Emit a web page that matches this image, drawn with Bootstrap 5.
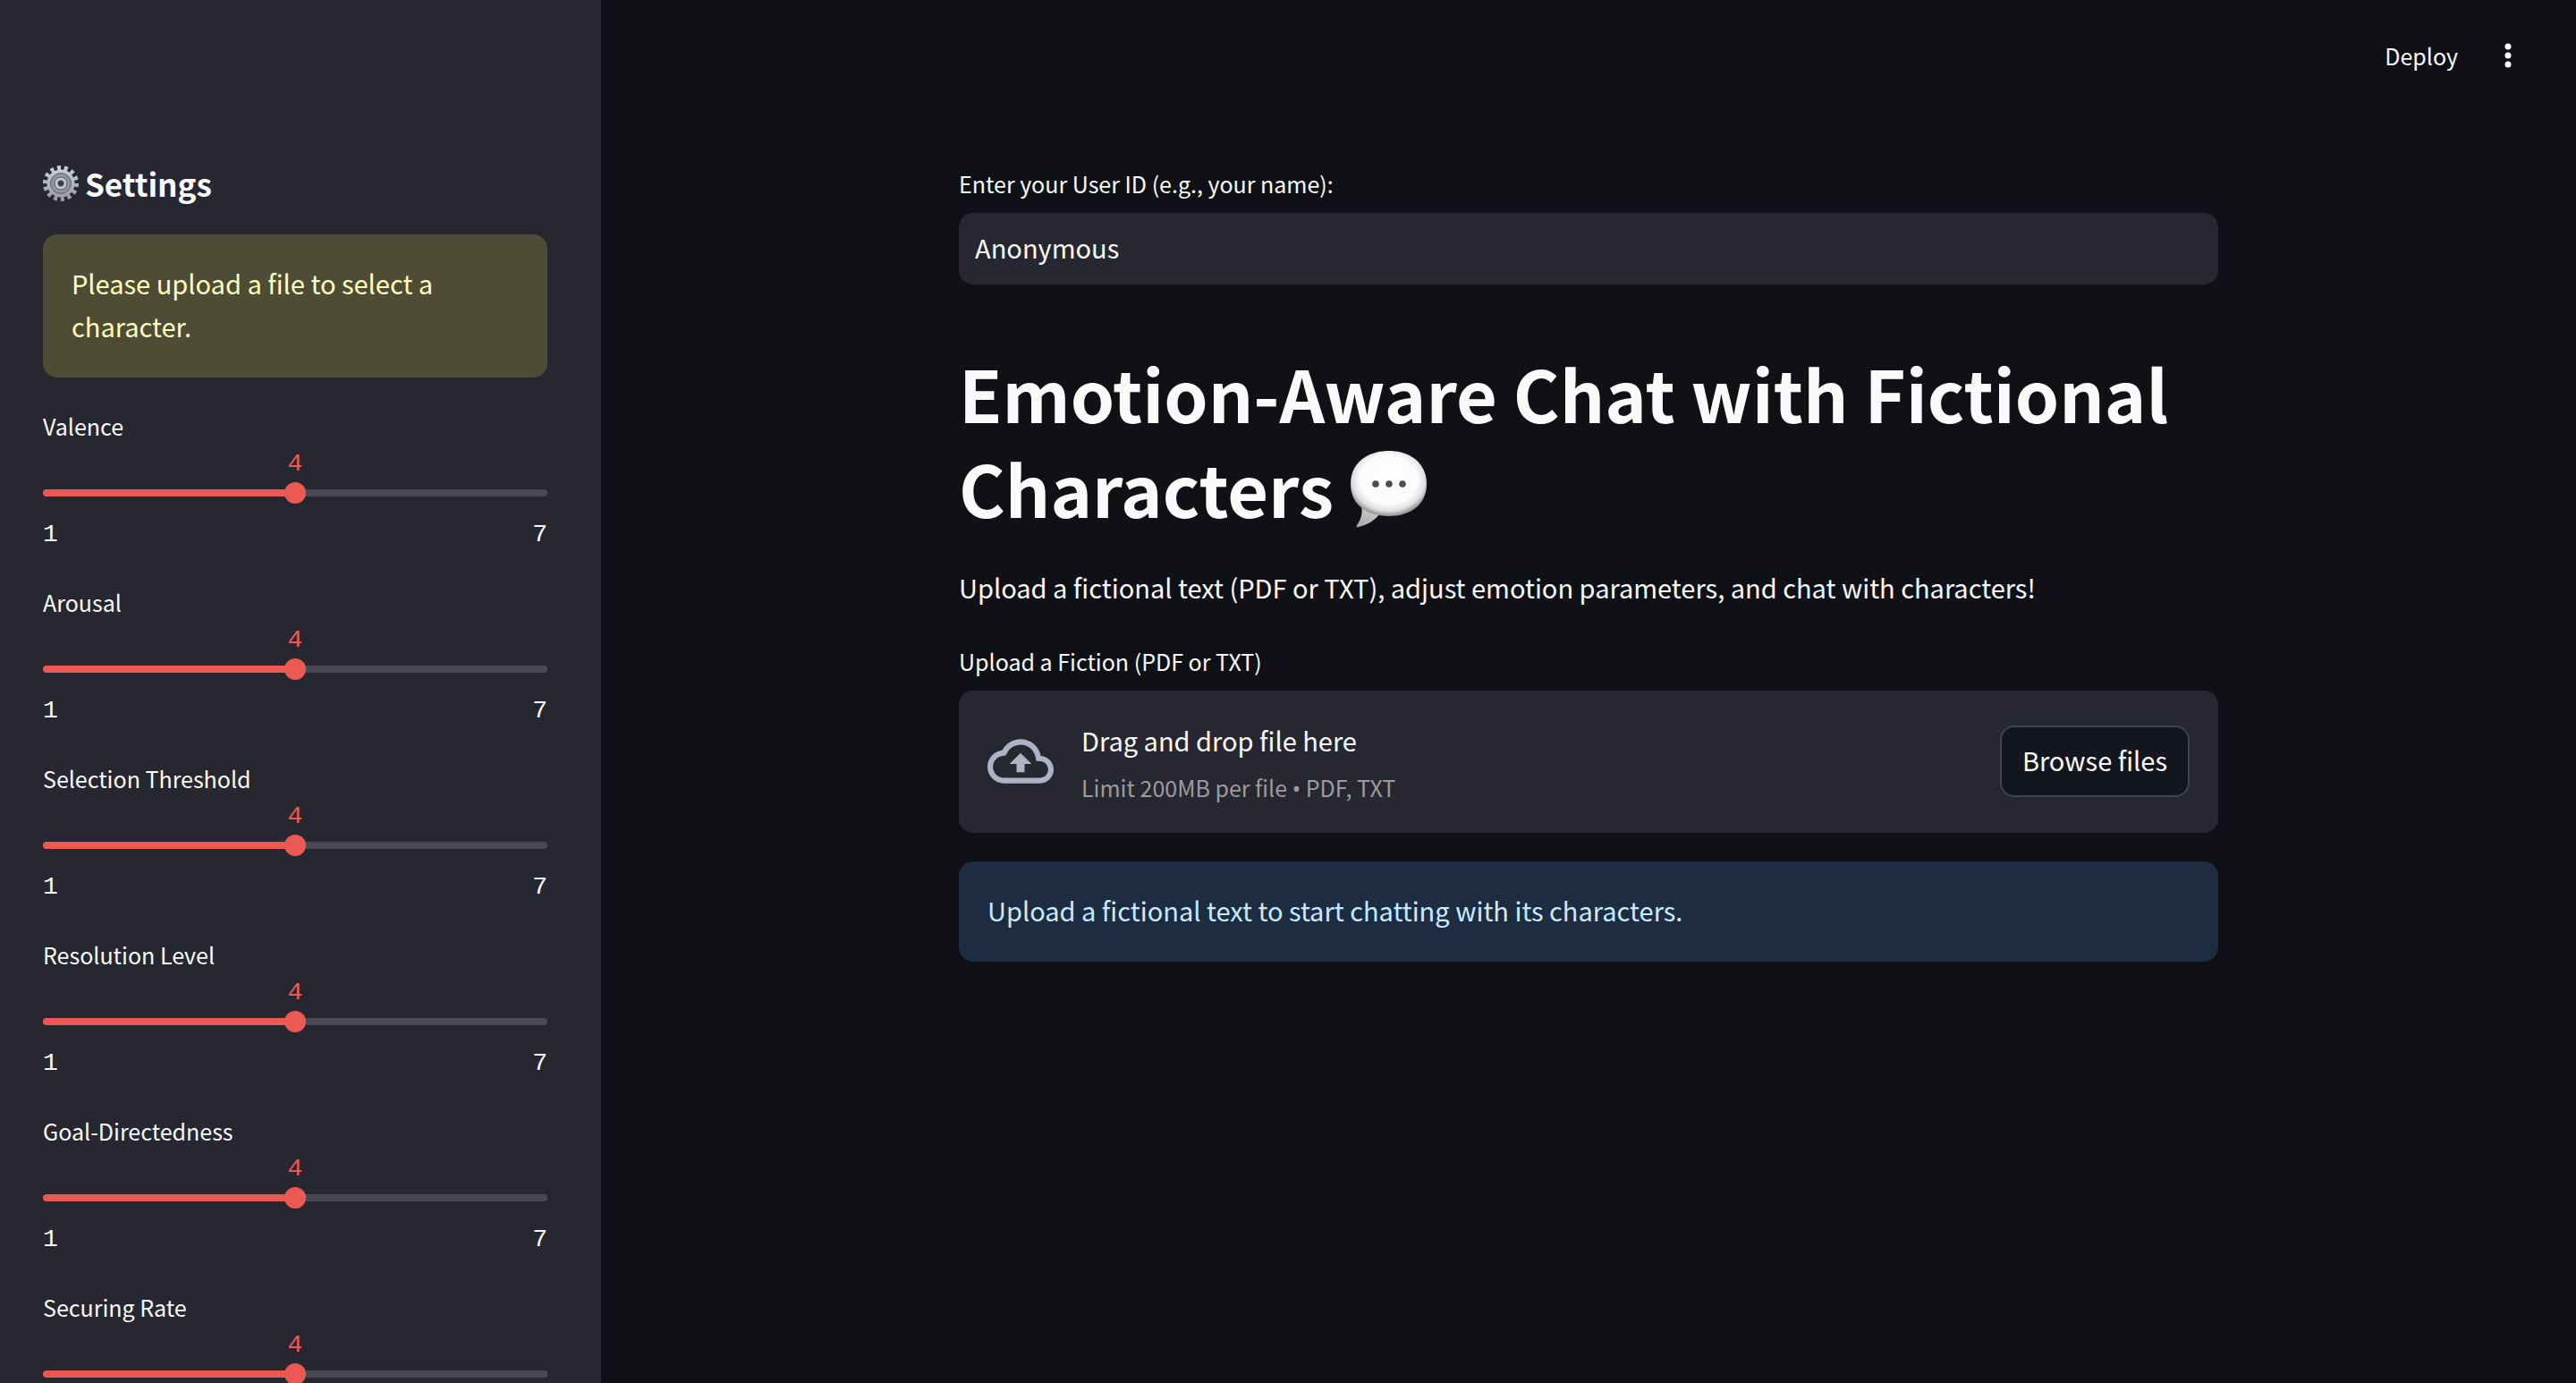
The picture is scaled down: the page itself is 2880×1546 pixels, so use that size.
<!DOCTYPE html>
<html lang="en">
<head>
<meta charset="utf-8">
<meta name="viewport" content="width=device-width, initial-scale=1">
<title>Emotion-Aware Chat</title>
<link href="https://cdn.jsdelivr.net/npm/bootstrap@5.3.0/dist/css/bootstrap.min.css" rel="stylesheet">
<style>
  :root { --ink: #fafafa; --page: #0f1116; --panel: #262730; --accent: #ec5953; --rail: #484953; }
  body { background: var(--page); color: var(--ink); font-family: "Noto Sans CJK SC", "Noto Sans", sans-serif; font-size: 29px; line-height: 48px; }
  .app-shell { height: 100vh; }
  .side-panel { width: 672px; background: var(--panel); padding: 181px 60px 0 48px; }
  .side-title { font-size: 35px; line-height: 48px; font-weight: 700; gap: 7px; margin-bottom: 33px; }
  .notice { border-radius: 16px; padding: 30px 32px 34px; }
  .notice-warn { background: #4e4c35; color: #ffffc2; margin-bottom: 34px; }
  .notice-info { background: #1e2c42; color: #c7ebff; margin-top: 32px; }
  .field-label { font-size: 25px; line-height: 40px; }
  .slider-field { margin-bottom: 35px; }
  .slider-field output, .slider-ends { font-family: "Liberation Mono", monospace; font-size: 28px; }
  .slider-field output { line-height: 30px; color: var(--accent); margin: 8px 0 5px; }
  .slider-field input { -webkit-appearance: none; appearance: none; height: 24px; background: transparent; }
  .slider-field input::-webkit-slider-runnable-track { height: 8px; border-radius: 4px; background: linear-gradient(to right, var(--accent) 50%, var(--rail) 50%); }
  .slider-field input::-webkit-slider-thumb { -webkit-appearance: none; width: 24px; height: 24px; margin-top: -8px; border-radius: 50%; background: var(--accent); }
  .slider-ends { line-height: 40px; margin-top: 15px; }
  .top-bar { height: 124px; padding: 0 64px; gap: 44px; }
  .bar-btn { background: none; border: 0; color: var(--ink); padding: 0; font-size: 25px; line-height: 40px; }
  .main-block { max-width: 1472px; padding: 61px 32px 0; }
  .main-block .field-label { margin-bottom: 13px; }
  .text-box { height: 80px; border: 0; border-radius: 16px; background: var(--panel); color: var(--ink); padding: 0 18px 5px; font-size: 29px; }
  .text-box:focus { background: var(--panel); color: var(--ink); }
  .page-title { font-size: 79px; line-height: 106px; font-weight: 700; margin: 68px 0 34px; }
  .page-title svg { width: 88px; height: 88px; vertical-align: -12px; }
  .intro { margin-bottom: 39px; }
  .drop-zone { background: var(--panel); border-radius: 16px; padding: 0 32px 1px; min-height: 159px; gap: 31px; }
  .drop-copy { padding-top: 1px; }
  .drop-hint { font-size: 25px; line-height: 40px; color: #9c9ca0; margin-top: 9px; }
  .drop-hint span { font-family: "Noto Sans", sans-serif; }
  .browse-btn { background: #14161f; color: var(--ink); border: 2px solid #41434c; border-radius: 16px; height: 80px; padding: 0 23px 5px; font-size: 29px; }
  .browse-btn:hover { color: var(--accent); border-color: var(--accent); }
</style>
</head>
<body>
<div class="app-shell d-flex overflow-hidden">
  <aside class="side-panel flex-shrink-0 overflow-hidden">
    <h2 class="side-title d-flex align-items-center">
      <svg width="40" height="40" viewBox="0 0 40 40" role="img" aria-label="gear">
        <defs>
          <linearGradient id="steel" x1="0" y1="0" x2="0" y2="1"><stop offset="0" stop-color="#c5d0d8"/><stop offset="1" stop-color="#a09da3"/></linearGradient>
        </defs>
        <circle cx="19.500" cy="20.500" r="16.500" fill="none" stroke="#55514f" stroke-width="6" pathLength="28" stroke-dasharray="1 1"/>
        <circle cx="20" cy="20" r="17" fill="none" stroke="url(#steel)" stroke-width="6" pathLength="28" stroke-dasharray="1 1"/>
        <circle cx="20" cy="20" r="15.500" fill="url(#steel)"/>
        <circle cx="20" cy="20" r="11.500" fill="#858b90" stroke="#666b70"/>
        <circle cx="20" cy="20" r="9" fill="none" stroke="#a4aaae"/>
        <circle cx="20" cy="20" r="7" fill="#c3cad0" stroke="#5c6166"/>
        <circle cx="20" cy="20" r="3.500" fill="#37393d" stroke="#7e8388"/>
      </svg>
      <span>Settings</span>
    </h2>
    <div class="notice notice-warn" role="alert">Please upload a file to select a character.</div>

    <div class="slider-field">
      <label class="field-label d-block" for="s1">Valence</label>
      <output class="d-block text-center" for="s1">4</output>
      <input class="d-block w-100" type="range" id="s1" min="1" max="7" value="4">
      <div class="slider-ends d-flex justify-content-between"><span>1</span><span>7</span></div>
    </div>
    <div class="slider-field">
      <label class="field-label d-block" for="s2">Arousal</label>
      <output class="d-block text-center" for="s2">4</output>
      <input class="d-block w-100" type="range" id="s2" min="1" max="7" value="4">
      <div class="slider-ends d-flex justify-content-between"><span>1</span><span>7</span></div>
    </div>
    <div class="slider-field">
      <label class="field-label d-block" for="s3">Selection Threshold</label>
      <output class="d-block text-center" for="s3">4</output>
      <input class="d-block w-100" type="range" id="s3" min="1" max="7" value="4">
      <div class="slider-ends d-flex justify-content-between"><span>1</span><span>7</span></div>
    </div>
    <div class="slider-field">
      <label class="field-label d-block" for="s4">Resolution Level</label>
      <output class="d-block text-center" for="s4">4</output>
      <input class="d-block w-100" type="range" id="s4" min="1" max="7" value="4">
      <div class="slider-ends d-flex justify-content-between"><span>1</span><span>7</span></div>
    </div>
    <div class="slider-field">
      <label class="field-label d-block" for="s5">Goal-Directedness</label>
      <output class="d-block text-center" for="s5">4</output>
      <input class="d-block w-100" type="range" id="s5" min="1" max="7" value="4">
      <div class="slider-ends d-flex justify-content-between"><span>1</span><span>7</span></div>
    </div>
    <div class="slider-field">
      <label class="field-label d-block" for="s6">Securing Rate</label>
      <output class="d-block text-center" for="s6">4</output>
      <input class="d-block w-100" type="range" id="s6" min="1" max="7" value="4">
    </div>
  </aside>

  <div class="flex-grow-1 overflow-auto">
    <header class="top-bar d-flex align-items-center justify-content-end">
      <button class="bar-btn" type="button">Deploy</button>
      <button class="bar-btn d-flex" type="button" aria-label="Main menu">
        <svg width="24" height="32" viewBox="0 0 24 32" fill="currentColor"><circle cx="12" cy="6" r="3.500"/><circle cx="12" cy="16" r="3.500"/><circle cx="12" cy="26" r="3.500"/></svg>
      </button>
    </header>
    <main class="main-block mx-auto">
      <label class="field-label d-block" for="user">Enter your User ID (e.g., your name):</label>
      <input class="form-control text-box" type="text" id="user" value="Anonymous">
      <h1 class="page-title">Emotion-Aware Chat with Fictional Characters
        <svg viewBox="0 0 88 88" role="img" aria-label="speech bubble">
          <defs>
            <radialGradient id="bubble" cx="0.5" cy="0.44" r="0.56"><stop offset="0" stop-color="#fff"/><stop offset="0.68" stop-color="#fbfbfb"/><stop offset="0.86" stop-color="#dedede"/><stop offset="1" stop-color="#8e8e8e"/></radialGradient>
            <linearGradient id="tail" x1="0" y1="1" x2="0.6" y2="0"><stop offset="0" stop-color="#a4a4a4"/><stop offset="1" stop-color="#cfcfcf"/></linearGradient>
          </defs>
          <path d="M13 62c2 9-1 17-5 22-1 2 0 3 2 2 9-2 18-7 24-15z" fill="url(#tail)"/>
          <path d="M44 1C68 1 86 15 86 38S68 74 44 74C19 74 1 61 1 38S19 1 44 1z" fill="url(#bubble)"/>
          <circle cx="29" cy="38" r="3.800" fill="#4c4c4c"/><circle cx="44" cy="38" r="3.800" fill="#4c4c4c"/><circle cx="59" cy="38" r="3.800" fill="#4c4c4c"/>
        </svg>
      </h1>
      <p class="intro">Upload a fictional text (PDF or TXT), adjust emotion parameters, and chat with characters!</p>
      <label class="field-label d-block" for="browse">Upload a Fiction (PDF or TXT)</label>
      <section class="drop-zone d-flex align-items-center">
        <svg class="flex-shrink-0" width="74" height="74" viewBox="0 0 24 24" fill="#afb2c4" aria-hidden="true"><path d="M19.350 10.040C18.670 6.590 15.640 4 12 4 9.110 4 6.600 5.640 5.350 8.040 2.340 8.360 0 10.910 0 14c0 3.310 2.690 6 6 6h13c2.760 0 5-2.240 5-5 0-2.640-2.050-4.780-4.650-4.960zM19 18H6c-2.210 0-4-1.790-4-4 0-2.050 1.530-3.760 3.560-3.970l1.070-.11.5-.95C8.080 7.140 9.940 6 12 6c2.620 0 4.880 1.860 5.390 4.430l.3 1.500 1.530.11c1.560.1 2.780 1.410 2.780 2.960 0 1.650-1.350 3-3 3zM8 13h2.550v3h2.900v-3H16l-4-4z"/></svg>
        <div class="drop-copy flex-grow-1">
          <div>Drag and drop file here</div>
          <div class="drop-hint">Limit 200MB per file <span>•</span> PDF, TXT</div>
        </div>
        <button class="browse-btn" type="button" id="browse">Browse files</button>
      </section>
      <div class="notice notice-info" role="status">Upload a fictional text to start chatting with its characters.</div>
    </main>
  </div>
</div>
<script src="https://cdn.jsdelivr.net/npm/bootstrap@5.3.0/dist/js/bootstrap.bundle.min.js"></script>
</body>
</html>
